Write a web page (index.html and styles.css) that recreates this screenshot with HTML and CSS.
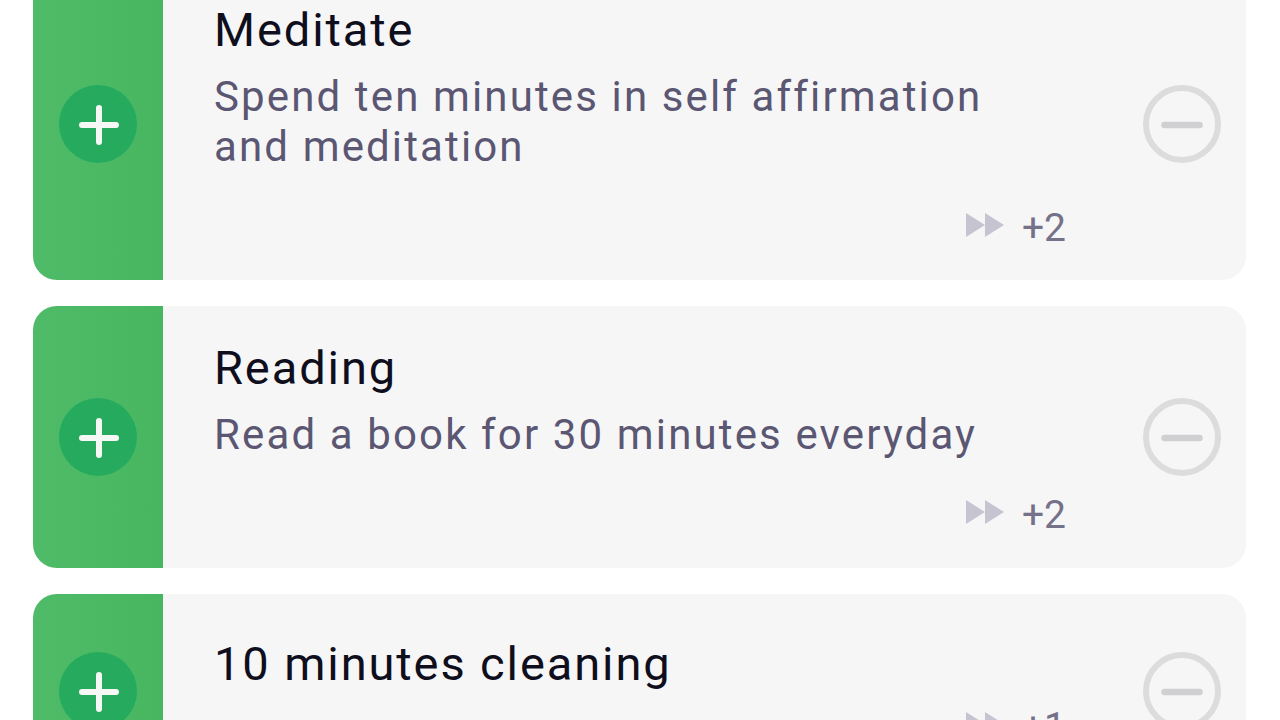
FILE: index.html
```html
<!DOCTYPE html>
<html lang="en">
<head>
<meta charset="utf-8">
<title>Habits</title>
<link rel="stylesheet" href="styles.css">
</head>
<body>
<main class="list">
  <article class="card card-tall">
    <button class="add" aria-label="Add">
      <svg class="add-icon" viewBox="0 0 78 78"><circle cx="39" cy="39" r="39" fill="#26ab5e"/><path d="M40 23v34M23 40h34" stroke="#f6f8f6" stroke-width="6" stroke-linecap="round"/></svg>
    </button>
    <div class="body">
      <h2 class="title">Meditate</h2>
      <p class="desc">Spend ten minutes in self affirmation<br>and meditation</p>
      <div class="meta">
        <svg class="skip" viewBox="0 0 38 26"><path d="M0 1v24L19 13zM19 1v24L38 13z"/></svg>
        <span class="count">+2</span>
      </div>
    </div>
    <button class="remove" aria-label="Remove">
      <svg class="remove-icon" viewBox="0 0 78 78"><circle cx="39" cy="39" r="36" fill="none" stroke="#dcdcdd" stroke-width="6"/><path d="M21.500 40h35" stroke="#d0d0d2" stroke-width="6.500" stroke-linecap="round"/></svg>
    </button>
  </article>

  <article class="card card-mid">
    <button class="add" aria-label="Add">
      <svg class="add-icon" viewBox="0 0 78 78"><circle cx="39" cy="39" r="39" fill="#26ab5e"/><path d="M40 23v34M23 40h34" stroke="#f6f8f6" stroke-width="6" stroke-linecap="round"/></svg>
    </button>
    <div class="body">
      <h2 class="title">Reading</h2>
      <p class="desc">Read a book for 30 minutes everyday</p>
      <div class="meta">
        <svg class="skip" viewBox="0 0 38 26"><path d="M0 1v24L19 13zM19 1v24L38 13z"/></svg>
        <span class="count">+2</span>
      </div>
    </div>
    <button class="remove" aria-label="Remove">
      <svg class="remove-icon" viewBox="0 0 78 78"><circle cx="39" cy="39" r="36" fill="none" stroke="#dcdcdd" stroke-width="6"/><path d="M21.500 40h35" stroke="#d0d0d2" stroke-width="6.500" stroke-linecap="round"/></svg>
    </button>
  </article>

  <article class="card card-short">
    <button class="add" aria-label="Add">
      <svg class="add-icon" viewBox="0 0 78 78"><circle cx="39" cy="39" r="39" fill="#26ab5e"/><path d="M40 23v34M23 40h34" stroke="#f6f8f6" stroke-width="6" stroke-linecap="round"/></svg>
    </button>
    <div class="body">
      <h2 class="title">10 minutes cleaning</h2>
      <div class="meta">
        <svg class="skip" viewBox="0 0 38 26"><path d="M0 1v24L19 13zM19 1v24L38 13z"/></svg>
        <span class="count">+1</span>
      </div>
    </div>
    <button class="remove" aria-label="Remove">
      <svg class="remove-icon" viewBox="0 0 78 78"><circle cx="39" cy="39" r="36" fill="none" stroke="#dcdcdd" stroke-width="6"/><path d="M21.500 40h35" stroke="#d0d0d2" stroke-width="6.500" stroke-linecap="round"/></svg>
    </button>
  </article>
</main>
</body>
</html>
```
FILE: styles.css
```css
html, body {
  margin: 0;
  height: 100%;
  overflow: hidden;
  background: #ffffff;
  font-family: Roboto, "Liberation Sans", sans-serif;
}

.list {
  display: flex;
  flex-direction: column;
  gap: 26px;
  width: 1213px;
  margin: -32px 0 0 33px;
}

.card {
  display: flex;
  flex-shrink: 0;
  background: #f6f6f7;
  border-radius: 24px;
  overflow: hidden;
}

.card-tall { height: 312px; }
.card-mid { height: 262px; }
.card-short { height: 194px; }

.add,
.remove {
  flex: 0 0 130px;
  display: flex;
  align-items: center;
  justify-content: center;
  padding: 0;
  border: 0;
  background: none;
}

.remove {
  padding-left: 2px;
}

.add {
  background: linear-gradient(90deg, #4fbb68, #48b661);
}

.add-icon,
.remove-icon {
  width: 78px;
  height: 78px;
}

.body {
  flex: 1;
  min-width: 0;
  padding: 37px 50px 0 51px;
}

.card-short .body {
  padding-top: 45px;
}

.title {
  margin: 0;
  font-size: 47px;
  line-height: 50px;
  font-weight: 400;
  letter-spacing: 1.9px;
  color: #0e0e1c;
}

.desc {
  margin: 17px 0 0;
  font-size: 42px;
  line-height: 50px;
  font-weight: 400;
  letter-spacing: 2.13px;
  color: #5b5773;
}

.meta {
  display: flex;
  align-items: flex-start;
  justify-content: flex-end;
  gap: 18px;
  margin-top: 34px;
}

.card-mid .meta {
  margin-top: 33px;
}

.card-short .meta {
  margin-top: 16px;
}

.skip {
  width: 38px;
  height: 26px;
  margin-top: 6px;
  fill: #c6c4d1;
}

.count {
  font-size: 39px;
  line-height: 44px;
  color: #757189;
}
```
